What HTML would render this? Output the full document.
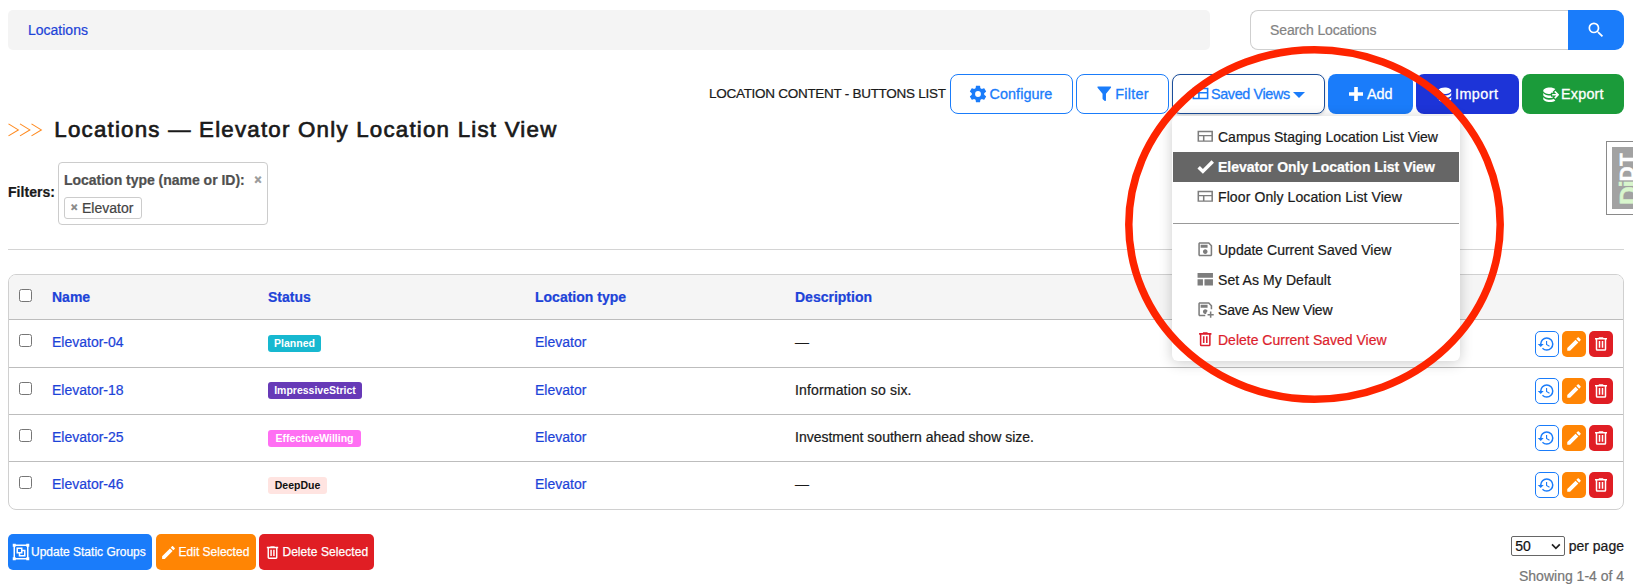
<!DOCTYPE html>
<html>
<head>
<meta charset="utf-8">
<title>Locations</title>
<style>
*{box-sizing:border-box;margin:0;padding:0}
html,body{width:1633px;height:588px;overflow:hidden;background:#fff}
body{font-family:"Liberation Sans",sans-serif;font-size:14px;color:#1a1a1a;position:relative}
.abs{position:absolute}
.t{position:absolute;white-space:nowrap;line-height:1;-webkit-text-stroke:.22px currentColor}
a,.lnk{color:#1d43d8;text-decoration:none}
/* breadcrumb */
#crumb{left:8px;top:10px;width:1202px;height:40px;background:#f4f4f4;border-radius:5px}
/* search */
#search{left:1250px;top:10px;width:319px;height:40px;border:1px solid #cfcfcf;border-right:none;border-radius:8px 0 0 8px;background:#fff}
#sbtn{left:1568px;top:10px;width:56px;height:40px;background:#1a7cfa;border-radius:0 9px 9px 0}
/* top buttons */
.btn{position:absolute;top:74px;height:40px;border-radius:8px}
.btn.o{background:#fff;border:1px solid #1a7cfa;color:#1a7cfa}
.btn .t{font-size:14.4px;top:13px}
.btn.o .t{top:12px;-webkit-text-stroke:.3px currentColor}
/* dropdown */
#menu{left:1172px;top:116px;width:288px;height:245px;background:#fff;border-radius:6px;box-shadow:0 2px 14px rgba(0,0,0,.2)}
.mi{position:absolute;left:1px;width:286px;height:30px}
.mi .t{left:45px;top:8px;font-size:14px;color:#1a1a1a}
.mi svg{position:absolute;left:22.800px;top:5.300px;width:18.500px;height:18.500px}
/* table */
#tbl{left:8px;top:274px;width:1616px;height:236px;border:1px solid #d0d0d0;border-radius:8px;background:#fff;overflow:hidden}
#thead{left:0;top:0;width:1614px;height:45px;background:#f5f5f5}
.rl{position:absolute;left:0;width:1614px;height:1px;background:#bdbdbd}
.cb{position:absolute;left:10px;width:13px;height:13px;border:1px solid #767676;border-radius:2.5px;background:#fff}
.th{font-weight:700;color:#1d43d8;font-size:14px}
.badge{position:absolute;left:259px;height:17px;border-radius:3px;color:#fff;font-weight:700;font-size:10.5px;line-height:17px;text-align:center;white-space:nowrap}
.ab{position:absolute;width:24px;height:26px;border-radius:5px}
/* bottom buttons */
.bb{position:absolute;top:534px;height:36px;border-radius:5px;color:#fff}
.bb .t{font-size:12px;top:12px;color:#fff;-webkit-text-stroke:.25px #fff}
</style>
</head>
<body>

<!-- breadcrumb -->
<div id="crumb" class="abs"></div>
<span class="t lnk" style="left:28px;top:23px;font-size:14px">Locations</span>

<!-- search -->
<div id="search" class="abs"></div>
<span class="t" style="left:1270px;top:23px;font-size:14px;letter-spacing:-.12px;color:#838383">Search Locations</span>
<div id="sbtn" class="abs">
<svg class="abs" style="left:18px;top:9.500px" width="20" height="20" viewBox="0 0 24 24"><path fill="#fff" d="M9.5 3A6.5 6.5 0 0 1 16 9.500c0 1.610-.590 3.090-1.560 4.230l.27.270h.79l5 5-1.500 1.500-5-5v-.790l-.270-.270A6.516 6.516 0 0 1 9.500 16 6.500 6.500 0 0 1 3 9.500 6.500 6.500 0 0 1 9.500 3m0 2C7 5 5 7 5 9.500S7 14 9.500 14 14 12 14 9.500 12 5 9.500 5z"/></svg>
</div>

<!-- buttons row -->
<span class="t" style="left:709px;top:87px;font-size:13.5px;letter-spacing:-.28px;color:#1a1a1a">LOCATION CONTENT - BUTTONS LIST</span>

<div class="btn o" style="left:950px;width:123px">
<svg class="abs" style="left:17px;top:8.500px" width="20" height="20" viewBox="0 0 24 24"><path fill="#1a7cfa" d="M12 15.500A3.500 3.500 0 0 1 8.500 12 3.500 3.500 0 0 1 12 8.500a3.500 3.500 0 0 1 3.500 3.500 3.500 3.500 0 0 1-3.500 3.500m7.430-2.530c.040-.320.070-.640.070-.970 0-.330-.030-.660-.070-1l2.110-1.630c.190-.150.240-.420.120-.640l-2-3.460c-.120-.220-.390-.310-.610-.220l-2.490 1c-.520-.390-1.060-.730-1.690-.980l-.370-2.650A.506.506 0 0 0 14 2h-4c-.250 0-.460.180-.500.420l-.370 2.650c-.630.250-1.170.590-1.690.980l-2.490-1c-.220-.090-.490 0-.610.220l-2 3.460c-.130.220-.070.490.120.640L4.570 11c-.040.340-.070.670-.070 1 0 .330.030.650.070.970l-2.110 1.660c-.190.150-.250.420-.120.640l2 3.460c.120.220.390.300.610.220l2.490-1.010c.520.400 1.060.740 1.690.990l.370 2.650c.040.240.250.420.500.420h4c.250 0 .460-.180.500-.420l.370-2.650c.630-.260 1.170-.590 1.690-.990l2.490 1.010c.220.080.490 0 .610-.220l2-3.460c.120-.220.070-.490-.120-.640l-2.110-1.660z"/></svg>
<span class="t" style="left:38.500px;letter-spacing:.06px">Configure</span>
</div>

<div class="btn o" style="left:1076px;width:93px">
<svg class="abs" style="left:16.500px;top:8.800px" width="20.500" height="19.500" preserveAspectRatio="none" viewBox="0 0 24 24"><path fill="#1a7cfa" d="M14 12v7.880c.040.300-.060.620-.290.830a.996.996 0 0 1-1.410 0l-2.010-2.010a.989.989 0 0 1-.290-.830V12h-.030L4.210 4.620a1 1 0 0 1 .170-1.400c.190-.140.400-.220.620-.220h14c.220 0 .430.080.620.220a1 1 0 0 1 .170 1.400L14.030 12H14z"/></svg>
<span class="t" style="left:38.300px;letter-spacing:.25px">Filter</span>
</div>

<div class="btn o" style="left:1172px;width:153px;border-color:#1b4e9b;box-shadow:0 1px 3px rgba(0,0,0,.16)">
<svg class="abs" style="left:17.700px;top:9.800px" width="19" height="17" preserveAspectRatio="none" viewBox="0 0 24 24"><path fill="#1a7cfa" d="M2 4v16h20V4H2m2 2h16v4H4V6m0 6h5v6H4v-6m7 0h9v6h-9v-6z"/></svg>
<span class="t" style="left:38px;letter-spacing:-.38px">Saved Views</span>
<svg class="abs" style="left:119.200px;top:16px" width="14" height="8" viewBox="0 0 14 8"><path fill="#1a7cfa" d="M1 1h12L7 7z"/></svg>
</div>

<div class="btn" style="left:1328px;width:85px;background:#1a7cfa">
<svg class="abs" style="left:20px;top:12px" width="16" height="16" viewBox="0 0 16 16"><path fill="#fff" d="M6.200 1h3.600v5.200H15v3.600H9.800V15H6.200V9.800H1V6.200h5.200z"/></svg>
<span class="t" style="left:39px;color:#fff;-webkit-text-stroke:.3px #fff">Add</span>
</div>

<div class="btn" style="left:1416px;width:103px;background:#1d34d8">
<svg class="abs" style="left:19px;top:10.500px" width="19.500" height="19.500" viewBox="0 0 24 24"><path fill="#fff" d="M12 3C8.590 3 5.690 4.070 4.540 5.570l5.250 5.250c.710.110 1.430.180 2.210.180 4.420 0 8-1.790 8-4s-3.580-4-8-4M3.920 7.080L2.500 8.500 5 11H0v2h5l-2.500 2.500 1.420 1.420L8.840 12M20 9c0 2.210-3.580 4-8 4-.660 0-1.300-.050-1.910-.130l-2.470 2.470c1.260.410 2.760.660 4.380.660 4.420 0 8-1.790 8-4m0 2c0 2.210-3.580 4-8 4-2.280 0-4.330-.5-5.790-1.250l-1.680 1.680C5.680 19.930 8.590 21 12 21c4.420 0 8-1.790 8-4"/></svg>
<span class="t" style="left:39px;color:#fff;letter-spacing:.42px;-webkit-text-stroke:.3px #fff">Import</span>
</div>

<div class="btn" style="left:1522px;width:102px;background:#1b9b3a">
<svg class="abs" style="left:17.500px;top:10.500px" width="19.500" height="19.500" viewBox="0 0 24 24"><path fill="#fff" d="M12 3C7.580 3 4 4.790 4 7c0 2.210 3.580 4 8 4 .5 0 1-.030 1.500-.080V9.500h2.890l-1-1L18.900 5C17.500 3.800 14.940 3 12 3m6.920 4.080L17.500 8.500 20 11h-5v2h5l-2.500 2.500 1.420 1.420L23.840 12M4 9v3c0 2.210 3.580 4 8 4 1.170 0 2.260-.150 3.250-.370l1.130-1.130H13.500v-1.580c-.5.050-1 .080-1.500.080-4.420 0-8-1.790-8-4m0 5v3c0 2.210 3.580 4 8 4 2.940 0 5.500-.800 6.900-2L17 17.100c-1.390.560-3.100.9-5 .9-4.420 0-8-1.790-8-4z"/></svg>
<span class="t" style="left:39px;color:#fff;letter-spacing:.2px;-webkit-text-stroke:.3px #fff">Export</span>
</div>

<!-- title -->
<svg class="abs" style="left:8px;top:122px" width="36" height="16" viewBox="0 0 36 16"><path fill="none" stroke="#ff8a1f" stroke-width="1.100" d="M.5 1.900l9.800 6-9.800 6M12 1.900l9.800 6-9.800 6M23.500 1.900l9.800 6-9.800 6"/></svg>
<span class="t" style="left:54.300px;top:118.600px;font-size:22.300px;letter-spacing:1.220px;color:#1a1a1a;-webkit-text-stroke:.7px #1a1a1a">Locations — Elevator Only Location List View</span>

<!-- filters -->
<span class="t" style="left:8px;top:185px;font-size:14px;font-weight:700;letter-spacing:.05px">Filters:</span>
<div class="abs" style="left:58px;top:162px;width:210px;height:63px;border:1px solid #ccc;border-radius:4px;background:#fff"></div>
<span class="t" style="left:64px;top:173px;font-size:14px;font-weight:700;color:#505050;letter-spacing:-.02px">Location type (name or ID):</span>
<span class="t" style="left:254.500px;top:174px;font-size:12px;font-weight:700;color:#999;-webkit-text-stroke:.6px #999">×</span>
<div class="abs" style="left:64px;top:197px;width:78px;height:22px;border:1px solid #ccc;border-radius:3px;background:#fff"></div>
<span class="t" style="left:71px;top:202px;font-size:11px;font-weight:700;color:#888;-webkit-text-stroke:.6px #888">×</span>
<span class="t" style="left:82px;top:201px;font-size:14px;color:#444">Elevator</span>

<!-- hr -->
<div class="abs" style="left:8px;top:249px;width:1616px;height:1px;background:#d4d4d4"></div>

<!-- table -->
<div id="tbl" class="abs">
<div id="thead" class="abs"></div>
<div class="rl" style="top:44px"></div>
<div class="rl" style="top:92px"></div>
<div class="rl" style="top:139px"></div>
<div class="rl" style="top:186px"></div>

<div class="cb" style="top:14px"></div>
<div class="cb" style="top:59px"></div>
<div class="cb" style="top:107px"></div>
<div class="cb" style="top:154px"></div>
<div class="cb" style="top:201px"></div>

<span class="t th" style="left:43px;top:15px">Name</span>
<span class="t th" style="left:259px;top:15px">Status</span>
<span class="t th" style="left:526px;top:15px">Location type</span>
<span class="t th" style="left:786px;top:15px">Description</span>

<!-- rows -->
<span class="t lnk" style="left:43px;top:60px">Elevator-04</span>
<span class="t lnk" style="left:43px;top:108px">Elevator-18</span>
<span class="t lnk" style="left:43px;top:155px">Elevator-25</span>
<span class="t lnk" style="left:43px;top:202px">Elevator-46</span>

<div class="badge" style="top:60px;width:53px;background:#17b8d0">Planned</div>
<div class="badge" style="top:107px;width:94px;background:#673ab7">ImpressiveStrict</div>
<div class="badge" style="top:155px;width:93px;background:#ff6ff3">EffectiveWilling</div>
<div class="badge" style="top:202px;width:59px;background:#ffe4e1;color:#111">DeepDue</div>

<span class="t lnk" style="left:526px;top:60px">Elevator</span>
<span class="t lnk" style="left:526px;top:108px">Elevator</span>
<span class="t lnk" style="left:526px;top:155px">Elevator</span>
<span class="t lnk" style="left:526px;top:202px">Elevator</span>

<span class="t" style="left:786px;top:60px">—</span>
<span class="t" style="left:786px;top:108px;letter-spacing:.16px">Information so six.</span>
<span class="t" style="left:786px;top:155px">Investment southern ahead show size.</span>
<span class="t" style="left:786px;top:202px">—</span>
</div>

<!-- bottom buttons -->
<div class="bb" style="left:8px;width:144px;background:#1a7cfa"><svg class="abs" style="left:4px;top:9px" width="18" height="18" viewBox="0 0 24 24"><path fill="#fff" d="M1 1v4h1v14H1v4h4v-1h14v1h4v-4h-1V5h1V1h-4v1H5V1H1m4 3h14v1h1v14h-1v1H5v-1H4V5h1V4m1 2v8h3v4h9V9h-4V6H6m2 2h4v4H8V8m6 3h2v5h-5v-2h3v-3z"/></svg><span class="t" style="left:23px">Update Static Groups</span></div>
<div class="bb" style="left:156px;width:100px;background:#ff8504"><svg class="abs" style="left:4px;top:10px" width="17" height="17" viewBox="0 0 24 24"><path fill="#fff" d="M20.710 7.040c.390-.390.390-1.040 0-1.410l-2.340-2.340c-.370-.390-1.020-.390-1.410 0l-1.840 1.830 3.750 3.750M3 17.250V21h3.750L17.810 9.930l-3.750-3.750L3 17.250z"/></svg><span class="t" style="left:22.600px">Edit Selected</span></div>
<div class="bb" style="left:259px;width:115px;background:#e01e24"><svg class="abs" style="left:4.500px;top:9.500px" width="17" height="17" viewBox="0 0 24 24"><path fill="#fff" d="M9 3v1H4v2h1v13a2 2 0 0 0 2 2h10a2 2 0 0 0 2-2V6h1V4h-5V3H9M7 6h10v13H7V6m2 2v9h2V8H9m4 0v9h2V8h-2z"/></svg><span class="t" style="left:23.400px;letter-spacing:.07px">Delete Selected</span></div>

<!-- pagination -->
<div class="abs" style="left:1511px;top:536px;width:54px;height:20px;border:1px solid #666;border-radius:2px;background:#fff"></div>
<span class="t" style="left:1515.300px;top:539px;font-size:14px;color:#111">50</span>
<svg class="abs" style="left:1550px;top:542px" width="12" height="9" viewBox="0 0 12 9"><path fill="none" stroke="#222" stroke-width="1.700" d="M2 2.300l3.900 4L9.800 2.300"/></svg>
<span class="t" style="left:1568.700px;top:539px;font-size:14px;color:#1a1a1a">per page</span>
<span class="t" style="left:1519px;top:569px;font-size:14px;letter-spacing:0px;color:#777">Showing 1-4 of 4</span>

<!-- dropdown menu -->
<div id="menu" class="abs">
<div class="mi" style="top:6px"><svg preserveAspectRatio="none" style="height:16.500px;top:6px" width="17" height="17" viewBox="0 0 24 24"><path fill="#7d7d7d" d="M2 4v16h20V4H2m2 2h16v4H4V6m0 6h5v6H4v-6m7 0h9v6h-9v-6z"/></svg><span class="t">Campus Staging Location List View</span></div>
<div class="mi" style="top:36px;background:#666"><svg style="width:21px;height:21px;left:21.500px;top:4px" width="17" height="17" viewBox="0 0 24 24"><path fill="#fff" d="M9 20.420l-6.210-6.210 2.830-2.830L9 14.770l9.880-9.890 2.830 2.830L9 20.420z"/></svg><span class="t" style="color:#fff;font-weight:700">Elevator Only Location List View</span></div>
<div class="mi" style="top:66px"><svg preserveAspectRatio="none" style="height:16.500px;top:6px" width="17" height="17" viewBox="0 0 24 24"><path fill="#7d7d7d" d="M2 4v16h20V4H2m2 2h16v4H4V6m0 6h5v6H4v-6m7 0h9v6h-9v-6z"/></svg><span class="t" style="letter-spacing:.1px">Floor Only Location List View</span></div>
<div class="abs" style="left:1px;top:107px;width:286px;height:1px;background:#999"></div>
<div class="mi" style="top:119px"><svg width="17" height="17" viewBox="0 0 24 24"><path fill="#7d7d7d" d="M17 3H5c-1.110 0-2 .9-2 2v14c0 1.100.89 2 2 2h14c1.100 0 2-.9 2-2V7l-4-4m2 16H5V5h11.170L19 7.830V19m-7-7c-1.660 0-3 1.340-3 3s1.340 3 3 3 3-1.340 3-3-1.340-3-3-3M6 6h9v4H6V6z"/></svg><span class="t">Update Current Saved View</span></div>
<div class="mi" style="top:149px"><svg width="17" height="17" viewBox="0 0 24 24"><path fill="#7d7d7d" d="M2 4h20v6H2V4m0 8h7v8H2v-8m9 0h11v8H11v-8z"/></svg><span class="t" style="letter-spacing:.1px">Set As My Default</span></div>
<div class="mi" style="top:179px"><svg width="17" height="17" viewBox="0 0 24 24"><path fill="#7d7d7d" d="M17 3H5c-1.110 0-2 .9-2 2v14c0 1.100.89 2 2 2h7v-2H5V5h11.170L19 7.830V12h2V7l-4-4M6 6h9v4H6V6m6 6c-1.660 0-3 1.340-3 3s1.340 3 3 3c.4 0 .8-.08 1.150-.22.2-1.400.9-2.600 1.850-3.400C14.700 13 13.500 12 12 12m6 3v3h-3v2h3v3h2v-3h3v-2h-3v-3h-2z"/></svg><span class="t" style="letter-spacing:-.18px">Save As New View</span></div>
<div class="mi" style="top:209px"><svg width="17" height="17" viewBox="0 0 24 24"><path fill="#dc1e2d" d="M9 3v1H4v2h1v13a2 2 0 0 0 2 2h10a2 2 0 0 0 2-2V6h1V4h-5V3H9M7 6h10v13H7V6m2 2v9h2V8H9m4 0v9h2V8h-2z"/></svg><span class="t" style="color:#dc1e2d">Delete Current Saved View</span></div>
</div>

<!-- row action buttons -->
<div class="ab" style="left:1535px;top:331px;background:#fff;border:1px solid #1a7cfa"><svg class="abs" style="left:1.300px;top:3.200px" width="18" height="18" viewBox="0 0 24 24"><path fill="#1a7cfa" d="M13.500 8H12v5l4.280 2.540.72-1.210-3.500-2.080V8M13 3a9 9 0 0 0-9 9H1l3.960 4.030L9 12H6a7 7 0 0 1 7-7 7 7 0 0 1 7 7 7 7 0 0 1-7 7c-1.930 0-3.680-.79-4.940-2.060l-1.420 1.420A8.896 8.896 0 0 0 13 21a9 9 0 0 0 9-9 9 9 0 0 0-9-9"/></svg></div>
<div class="ab" style="left:1562px;top:331px;background:#ff8504"><svg class="abs" style="left:2.900px;top:4px" width="18" height="18" viewBox="0 0 24 24"><path fill="#fff" d="M20.710 7.040c.390-.390.390-1.040 0-1.410l-2.340-2.340c-.370-.390-1.020-.390-1.410 0l-1.840 1.830 3.750 3.750M3 17.250V21h3.750L17.810 9.930l-3.750-3.750L3 17.250z"/></svg></div>
<div class="ab" style="left:1589px;top:331px;background:#e01e24"><svg class="abs" style="left:3px;top:3.800px" width="18" height="18" viewBox="0 0 24 24"><path fill="#fff" d="M9 3v1H4v2h1v13a2 2 0 0 0 2 2h10a2 2 0 0 0 2-2V6h1V4h-5V3H9M7 6h10v13H7V6m2 2v9h2V8H9m4 0v9h2V8h-2z"/></svg></div>
<div class="ab" style="left:1535px;top:378px;background:#fff;border:1px solid #1a7cfa"><svg class="abs" style="left:1.300px;top:3.200px" width="18" height="18" viewBox="0 0 24 24"><path fill="#1a7cfa" d="M13.500 8H12v5l4.280 2.540.72-1.210-3.500-2.080V8M13 3a9 9 0 0 0-9 9H1l3.960 4.030L9 12H6a7 7 0 0 1 7-7 7 7 0 0 1 7 7 7 7 0 0 1-7 7c-1.930 0-3.680-.79-4.940-2.060l-1.420 1.420A8.896 8.896 0 0 0 13 21a9 9 0 0 0 9-9 9 9 0 0 0-9-9"/></svg></div>
<div class="ab" style="left:1562px;top:378px;background:#ff8504"><svg class="abs" style="left:2.900px;top:4px" width="18" height="18" viewBox="0 0 24 24"><path fill="#fff" d="M20.710 7.040c.390-.390.390-1.040 0-1.410l-2.340-2.340c-.370-.390-1.020-.390-1.410 0l-1.840 1.830 3.750 3.750M3 17.250V21h3.750L17.810 9.930l-3.750-3.750L3 17.250z"/></svg></div>
<div class="ab" style="left:1589px;top:378px;background:#e01e24"><svg class="abs" style="left:3px;top:3.800px" width="18" height="18" viewBox="0 0 24 24"><path fill="#fff" d="M9 3v1H4v2h1v13a2 2 0 0 0 2 2h10a2 2 0 0 0 2-2V6h1V4h-5V3H9M7 6h10v13H7V6m2 2v9h2V8H9m4 0v9h2V8h-2z"/></svg></div>
<div class="ab" style="left:1535px;top:425px;background:#fff;border:1px solid #1a7cfa"><svg class="abs" style="left:1.300px;top:3.200px" width="18" height="18" viewBox="0 0 24 24"><path fill="#1a7cfa" d="M13.500 8H12v5l4.280 2.540.72-1.210-3.500-2.080V8M13 3a9 9 0 0 0-9 9H1l3.960 4.030L9 12H6a7 7 0 0 1 7-7 7 7 0 0 1 7 7 7 7 0 0 1-7 7c-1.930 0-3.680-.79-4.940-2.060l-1.420 1.420A8.896 8.896 0 0 0 13 21a9 9 0 0 0 9-9 9 9 0 0 0-9-9"/></svg></div>
<div class="ab" style="left:1562px;top:425px;background:#ff8504"><svg class="abs" style="left:2.900px;top:4px" width="18" height="18" viewBox="0 0 24 24"><path fill="#fff" d="M20.710 7.040c.390-.390.390-1.040 0-1.410l-2.340-2.340c-.370-.390-1.020-.390-1.410 0l-1.840 1.830 3.750 3.750M3 17.250V21h3.750L17.810 9.930l-3.750-3.750L3 17.250z"/></svg></div>
<div class="ab" style="left:1589px;top:425px;background:#e01e24"><svg class="abs" style="left:3px;top:3.800px" width="18" height="18" viewBox="0 0 24 24"><path fill="#fff" d="M9 3v1H4v2h1v13a2 2 0 0 0 2 2h10a2 2 0 0 0 2-2V6h1V4h-5V3H9M7 6h10v13H7V6m2 2v9h2V8H9m4 0v9h2V8h-2z"/></svg></div>
<div class="ab" style="left:1535px;top:472px;background:#fff;border:1px solid #1a7cfa"><svg class="abs" style="left:1.300px;top:3.200px" width="18" height="18" viewBox="0 0 24 24"><path fill="#1a7cfa" d="M13.500 8H12v5l4.280 2.540.72-1.210-3.500-2.080V8M13 3a9 9 0 0 0-9 9H1l3.960 4.030L9 12H6a7 7 0 0 1 7-7 7 7 0 0 1 7 7 7 7 0 0 1-7 7c-1.930 0-3.680-.79-4.940-2.060l-1.420 1.420A8.896 8.896 0 0 0 13 21a9 9 0 0 0 9-9 9 9 0 0 0-9-9"/></svg></div>
<div class="ab" style="left:1562px;top:472px;background:#ff8504"><svg class="abs" style="left:2.900px;top:4px" width="18" height="18" viewBox="0 0 24 24"><path fill="#fff" d="M20.710 7.040c.390-.390.390-1.040 0-1.410l-2.340-2.340c-.370-.390-1.020-.390-1.410 0l-1.840 1.830 3.750 3.750M3 17.250V21h3.750L17.810 9.930l-3.750-3.750L3 17.250z"/></svg></div>
<div class="ab" style="left:1589px;top:472px;background:#e01e24"><svg class="abs" style="left:3px;top:3.800px" width="18" height="18" viewBox="0 0 24 24"><path fill="#fff" d="M9 3v1H4v2h1v13a2 2 0 0 0 2 2h10a2 2 0 0 0 2-2V6h1V4h-5V3H9M7 6h10v13H7V6m2 2v9h2V8H9m4 0v9h2V8h-2z"/></svg></div>


<!-- DjDT -->
<div class="abs" style="left:1606px;top:141px;width:40px;height:74px;border:1px solid #8a8a8a;background:#fff"></div>
<div class="abs" style="left:1612px;top:147px;width:30px;height:62px;background:#a2a2a2"></div>
<span class="t" style="left:1616px;top:205px;font-size:26px;font-weight:700;color:#fff;transform-origin:0 0;transform:rotate(-90deg);letter-spacing:-1.2px;-webkit-text-stroke:.5px currentColor"><span style="color:#d9f6cd;-webkit-text-stroke:.5px #d9f6cd">Dj</span><span style="font-size:21px;letter-spacing:.2px;vertical-align:3.600px">DT</span></span>

<!-- red ellipse -->
<svg class="abs" style="left:1110px;top:36px" width="410" height="380" viewBox="1110 36 410 380"><ellipse cx="1314.500" cy="224.500" rx="185.700" ry="174.700" fill="none" stroke="#fe2400" stroke-width="7.500"/></svg>

</body>
</html>
